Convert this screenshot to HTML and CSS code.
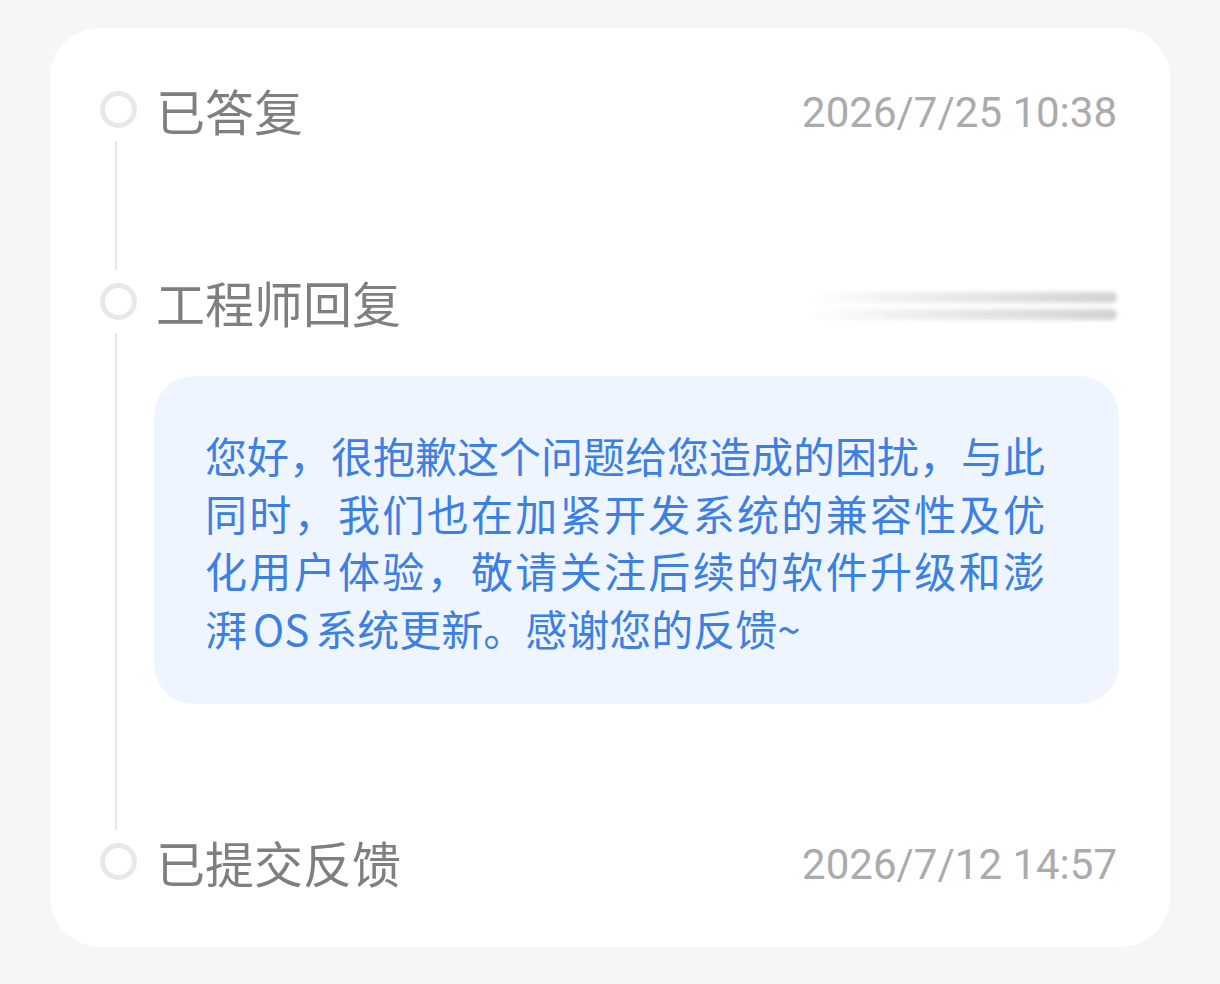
FILE: index.html
```html
<!DOCTYPE html>
<html lang="zh-CN">
<head>
    <meta charset="UTF-8">
    <meta name="viewport" content="width=device-width, initial-scale=1.0">
    <title>反馈进度</title>
    <link rel="stylesheet" href="styles.css">
</head>
<body>
    <div class="progress-card">
        <div class="step">
            <div class="marker">
                <span class="dot"></span>
                <span class="rail"></span>
            </div>
            <div class="step-body">
                <div class="step-head">
                    <span class="step-title">已答复</span>
                    <span class="step-time">2026/7/25 10:38</span>
                </div>
                <div class="spacer-top"></div>
            </div>
        </div>

        <div class="step">
            <div class="marker">
                <span class="dot"></span>
                <span class="rail"></span>
            </div>
            <div class="step-body">
                <div class="step-head">
                    <span class="step-title">工程师回复</span>
                    <!-- engineer id is masked -->
                    <span class="masked">
                        <span class="masked-bar"></span>
                        <span class="masked-bar"></span>
                    </span>
                </div>
                <div class="reply-bubble">
                    <span class="reply-line">您好，很抱歉这个问题给您造成的困扰，与此</span>
                    <span class="reply-line">同时，我们也在加紧开发系统的兼容性及优</span>
                    <span class="reply-line">化用户体验，敬请关注后续的软件升级和澎</span>
                    <span class="reply-line last">湃<span class="latin">OS</span>系统更新。感谢您的反馈~</span>
                </div>
                <div class="spacer-bottom"></div>
            </div>
        </div>

        <div class="step">
            <div class="marker">
                <span class="dot"></span>
            </div>
            <div class="step-body">
                <div class="step-head">
                    <span class="step-title">已提交反馈</span>
                    <span class="step-time">2026/7/12 14:57</span>
                </div>
            </div>
        </div>
    </div>
</body>
</html>
```

FILE: styles.css
```css
body {
    margin: 0;
    padding: 0;
    background-color: #f6f6f6;
    font-family: "Noto Sans CJK SC", "Noto Sans", sans-serif;
}
.progress-card {
    margin: 28px 50px 0;
    padding: 50px 51px 53px 50px;
    background-color: #fff;
    border-radius: 50px;
}
.step {
    display: flex;
    gap: 17px;
}
.marker {
    width: 37px;
    flex-shrink: 0;
    display: flex;
    flex-direction: column;
    align-items: center;
}
.dot {
    width: 37px;
    height: 37px;
    margin-top: 13px;
    box-sizing: border-box;
    border: 5px solid #e8e8e8;
    border-radius: 50%;
}
.rail {
    flex: 1;
    width: 2px;
    margin: 13px 6px 0 0;
    background-color: #e6e6e6;
}
.step-body {
    flex: 1;
    min-width: 0;
}
.step-head {
    height: 64px;
    display: flex;
    align-items: center;
    justify-content: space-between;
}
.step-title {
    font-size: 49px;
    color: #7f7f7f;
    line-height: 64px;
    margin-left: 2px;
}
.step-time {
    font-family: Roboto, "Noto Sans", sans-serif;
    font-size: 42px;
    color: #ababab;
    margin: 4px 2px 0 0;
}
.spacer-top {
    height: 128px;
}
.spacer-bottom {
    height: 126px;
}
.masked {
    width: 312px;
    display: flex;
    flex-direction: column;
    gap: 6px;
    margin: 8px 2px 0 0;
    filter: blur(2px);
}
.masked-bar {
    height: 11px;
    border-radius: 6px;
    background: linear-gradient(to right, rgba(230, 230, 230, 0), #ececec 40%, #d2d2d2);
}
.reply-bubble {
    margin-top: 42px;
    padding: 50px 74px 48px 51px;
    background-color: #eff5fe;
    border-radius: 40px;
    color: #3b80e2;
    font-size: 42px;
    line-height: 57.5px;
}
/* each line is spread to the full width, like the app's justified text */
.reply-line {
    display: block;
    text-align: justify;
    text-align-last: justify;
}
.reply-line.last {
    text-align-last: left;
}
.latin {
    margin: 0 6px;
}
```
